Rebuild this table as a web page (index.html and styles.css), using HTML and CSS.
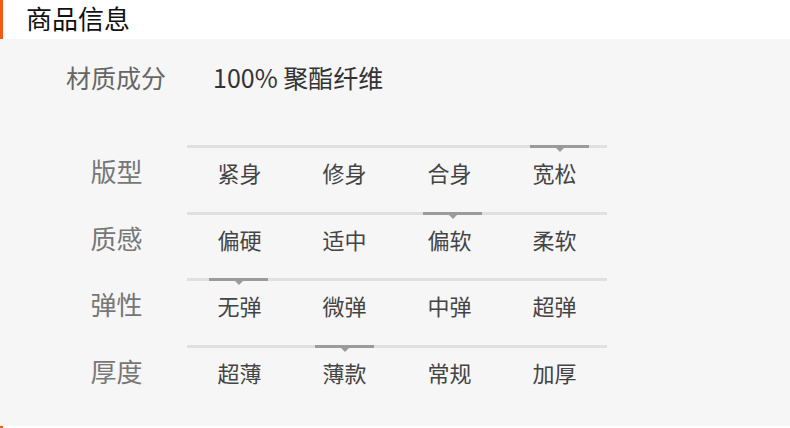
FILE: index.html
```html
<!DOCTYPE html>
<html lang="zh-CN">
<head>
<meta charset="utf-8">
<title>商品信息</title>
<link rel="stylesheet" href="styles.css">
</head>
<body>
<div class="page">
  <div class="section-title">商品信息</div>
  <div class="info">
    <div class="material">
      <span class="material-label">材质成分</span>
      <span class="material-value">100% 聚酯纤维</span>
    </div>
    <div class="specs">
      <div class="spec-row">
        <div class="spec-label">版型</div>
        <div class="spec-options">
          <div class="track"><span class="marker" style="left:343px"></span></div>
          <span class="opt">紧身</span><span class="opt">修身</span><span class="opt">合身</span><span class="opt">宽松</span>
        </div>
      </div>
      <div class="spec-row">
        <div class="spec-label">质感</div>
        <div class="spec-options">
          <div class="track"><span class="marker" style="left:236px"></span></div>
          <span class="opt">偏硬</span><span class="opt">适中</span><span class="opt">偏软</span><span class="opt">柔软</span>
        </div>
      </div>
      <div class="spec-row">
        <div class="spec-label">弹性</div>
        <div class="spec-options">
          <div class="track"><span class="marker" style="left:22px"></span></div>
          <span class="opt">无弹</span><span class="opt">微弹</span><span class="opt">中弹</span><span class="opt">超弹</span>
        </div>
      </div>
      <div class="spec-row">
        <div class="spec-label">厚度</div>
        <div class="spec-options">
          <div class="track"><span class="marker" style="left:128px"></span></div>
          <span class="opt">超薄</span><span class="opt">薄款</span><span class="opt">常规</span><span class="opt">加厚</span>
        </div>
      </div>
    </div>
  </div>
  <div class="next-title"></div>
</div>
</body>
</html>
```
FILE: styles.css
```css
html, body {
  margin: 0;
  padding: 0;
}
body {
  width: 790px;
  height: 428px;
  overflow: hidden;
  background: #ffffff;
  font-family: "Noto Sans CJK SC", "Noto Sans", sans-serif;
}
.page {
  display: flex;
  flex-direction: column;
}
.section-title {
  height: 39px;
  box-sizing: border-box;
  border-left: 3px solid #f25a12;
  padding-left: 23px;
  background: #ffffff;
  color: #111111;
  font-size: 26px;
  line-height: 35px;
}
.info {
  background: #f6f6f6;
  height: 387px;
  box-sizing: border-box;
  padding-top: 21px;
}
.material {
  display: flex;
  align-items: center;
  height: 34px;
  padding-left: 66px;
}
.material-label {
  width: 147px;
  font-size: 25px;
  color: #666666;
}
.material-value {
  font-size: 25px;
  color: #333333;
}
.specs {
  margin-top: 51px;
  padding-left: 66px;
  display: flex;
  flex-direction: column;
}
.spec-row {
  display: flex;
  height: 66.5px;
}
.spec-label {
  width: 101px;
  margin-right: 20px;
  text-align: center;
  font-size: 26px;
  color: #777777;
  padding-top: 9px;
  line-height: 34px;
}
.spec-options {
  position: relative;
  width: 420px;
  display: grid;
  grid-template-columns: repeat(4, 105px);
  align-content: start;
}
.track {
  grid-column: 1 / -1;
  height: 3px;
  background: #e0e0e0;
  position: relative;
  margin-bottom: 8px;
}
.marker {
  position: absolute;
  top: 0;
  width: 59px;
  height: 3px;
  background: #9b9b9b;
}
.marker::after {
  content: "";
  position: absolute;
  left: 50%;
  top: 3px;
  margin-left: -4px;
  border-left: 4px solid transparent;
  border-right: 4px solid transparent;
  border-top: 4px solid #9b9b9b;
}
.opt {
  text-align: center;
  font-size: 22px;
  line-height: 32px;
  color: #444444;
}
.next-title {
  height: 2px;
  border-left: 3px solid #f25a12;
}
```
